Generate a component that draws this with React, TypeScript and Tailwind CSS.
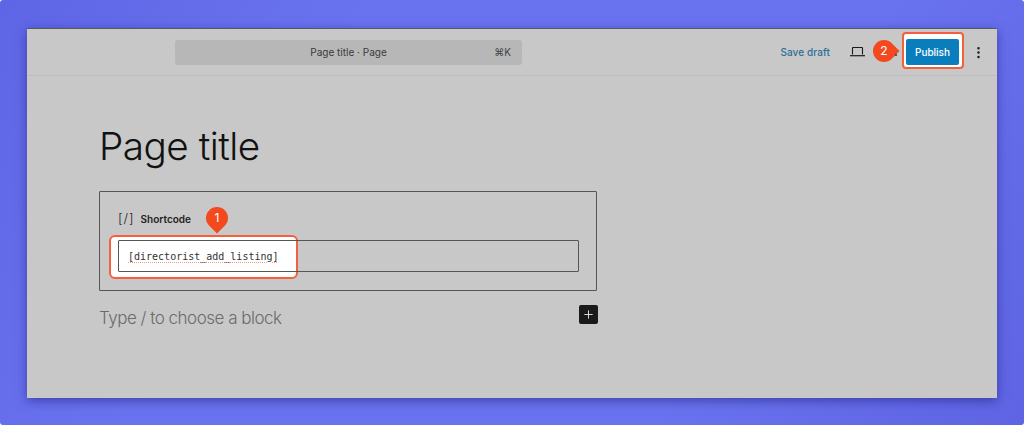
import { MoreVertical, Plus } from "lucide-react";

const sans = "font-['Inter','Liberation_Sans',sans-serif]";

function Badge({ label, tip }: { label: string; tip: "down" | "right" }) {
  return (
    <span className="relative flex size-[22px] items-center justify-center">
      <span
        className={`absolute inset-0 bg-[#f4491f] ${
          tip === "down"
            ? "rotate-45 rounded-[50%_50%_0_50%]"
            : "rounded-[50%_50%_0_50%] -rotate-45"
        }`}
      />
      <span className="relative text-[12px] leading-none text-white">{label}</span>
    </span>
  );
}

export default function App() {
  return (
    <div
      className={`h-[425px] w-[1024px] overflow-hidden rounded-[3px] bg-[linear-gradient(120deg,#5f66e6,#6a73ef_30%,#6a73ef_70%,#5e64e3)] px-[27px] pt-[28px] ${sans}`}
    >
      <div className="h-[370px] w-[970px] border-t border-[#555b5c] bg-[#c8c8c8] shadow-[0_3px_10px_rgba(30,30,120,0.55)]">
        <header className="flex h-[47px] items-center border-b border-[#bcbcbc] pl-[148px] pr-[11px]">
          <div className="relative flex h-[25px] w-[347px] items-center justify-center rounded-[3px] bg-[#b7b7b7] text-[10px] text-[#3a3a3a]">
            Page title · Page
            <span className="absolute right-[11px] text-[#444]">⌘K</span>
          </div>

          <span className="ml-auto text-[10px] font-medium tracking-[0.1px] text-[#2a7099]">Save draft</span>
          <svg className="ml-[20px] h-[10px] w-[15px] text-[#1a1a1a]" viewBox="0 0 15 10" fill="none" stroke="currentColor">
            <path d="M2.5 7.5V1.2a.7.7 0 0 1 .7-.7h8.6a.7.7 0 0 1 .7.7v6.3" strokeWidth="1.1" />
            <path d="M0 8.7h15" strokeWidth="1.2" />
          </svg>
          <span className="relative mb-[2px] ml-[8px]">
            <Badge label="2" tip="right" />
            <span className="absolute -right-[2px] top-[14px] size-[2px] rounded-full bg-[#333]" />
          </span>

          <div className="mb-[3px] ml-[7px] h-[37px] w-[62px] rounded-[4px] border-2 border-[#f4603c] bg-white pl-[2px] pt-[5px]">
            <span className="flex h-[26px] w-[53px] items-center justify-center rounded-[2px] bg-[#0a7ebc] text-[10px] font-medium text-white">
              Publish
            </span>
          </div>
          <MoreVertical className="ml-[7px] size-[15px] text-[#1a1a1a]" strokeWidth={2} />
        </header>

        <main className="ml-[72px] w-[498px] pt-[45px]">
          <h1 className="text-[38.7px] font-light leading-[50px] tracking-[-0.5px] text-[#111]">Page title</h1>

          <section className="mt-[20px] h-[100px] rounded-[1px] border border-[#555] pl-[18px] pr-[17px] pt-[19px]">
            <div className="flex h-[16px] items-center gap-[6px] text-[#1e1e1e]">
              <span className="text-[13px] font-light tracking-[1px]">[/]</span>
              <span className="text-[10px] font-semibold text-[#222]">Shortcode</span>
              <span className="absolute left-[206px] top-[207px]">
                <Badge label="1" tip="down" />
              </span>
            </div>

            <div className="relative mt-[13px]">
              <div className="absolute -left-[9px] -top-[5px] h-[44px] w-[189px] rounded-[6px] border-2 border-[#f4603c] bg-white" />
              <div className="relative flex h-[32px] items-center rounded-[1px] border border-[#555] pl-[9px] pt-[1px] font-['DejaVu_Sans_Mono','Liberation_Mono',monospace] text-[10px] text-[#333]">
                <span className="underline decoration-[#ef9a88] decoration-dotted decoration-1 underline-offset-[2px]">
                  [directorist_add_listing]
                </span>
              </div>
            </div>
          </section>

          <div className="-mr-px mt-[14px] flex items-start justify-between">
            <p className="text-[17px] font-light leading-[26px] tracking-[-0.5px] text-[#6b6b6b]">
              Type / to choose a block
            </p>
            <span className="flex size-[19px] items-center justify-center rounded-[2px] bg-[#1a1a1a] text-white">
              <Plus className="size-[13px]" strokeWidth={1.5} />
            </span>
          </div>
        </main>
      </div>
    </div>
  );
}
